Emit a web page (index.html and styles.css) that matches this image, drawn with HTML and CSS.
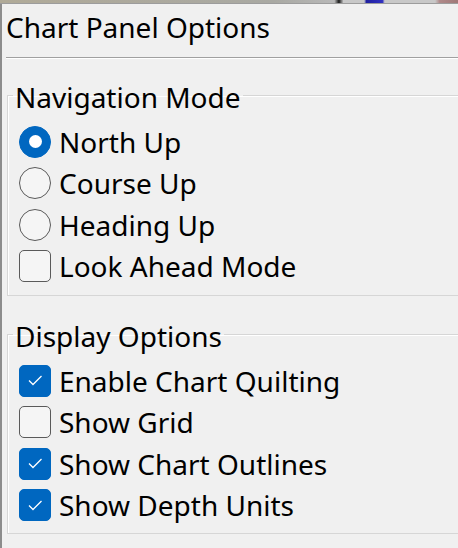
FILE: index.html
```html
<!DOCTYPE html>
<html>
<head>
<meta charset="utf-8">
<title>Chart Panel Options</title>
<link rel="stylesheet" href="styles.css">
</head>
<body>
<div class="topstrip"></div>
<div class="panel">
  <div class="title">Chart Panel Options</div>
  <div class="sep"></div>
  <fieldset class="group group-nav">
    <legend class="legend">Navigation Mode</legend>
    <div class="rows">
      <label class="row"><span class="radio radio-on"></span><span class="label">North Up</span></label>
      <label class="row"><span class="radio"></span><span class="label">Course Up</span></label>
      <label class="row"><span class="radio"></span><span class="label">Heading Up</span></label>
      <label class="row"><span class="check"></span><span class="label">Look Ahead Mode</span></label>
    </div>
  </fieldset>
  <fieldset class="group group-display">
    <legend class="legend">Display Options</legend>
    <div class="rows rows-display">
      <label class="row"><span class="check check-on"><svg viewBox="0 0 32 32" width="32" height="32"><path d="M10 16.5 L14 20.5 L22.5 12" fill="none" stroke="#fff" stroke-width="1.3"/></svg></span><span class="label">Enable Chart Quilting</span></label>
      <label class="row"><span class="check"></span><span class="label">Show Grid</span></label>
      <label class="row"><span class="check check-on"><svg viewBox="0 0 32 32" width="32" height="32"><path d="M10 16.5 L14 20.5 L22.5 12" fill="none" stroke="#fff" stroke-width="1.3"/></svg></span><span class="label">Show Chart Outlines</span></label>
      <label class="row"><span class="check check-on"><svg viewBox="0 0 32 32" width="32" height="32"><path d="M10 16.5 L14 20.5 L22.5 12" fill="none" stroke="#fff" stroke-width="1.3"/></svg></span><span class="label">Show Depth Units</span></label>
    </div>
  </fieldset>
</div>
</body>
</html>
```

FILE: styles.css
```css
html, body {
  margin: 0;
  padding: 0;
}
body {
  width: 458px;
  height: 548px;
  overflow: hidden;
  background: #f0f0f0;
  font-family: "Noto Sans", "Open Sans", sans-serif;
  color: #000;
}
.topstrip {
  height: 3px;
  background: linear-gradient(to right, #b0aa98 0%, #a9a9a3 60%, #b8b8b8 73%, #1a1a1a 74%, #c8c8c8 75%, #c8c8c8 79.5%, #2020a0 80%, #3030c0 83.5%, #c8c8c8 84%, #c8c8c8 95%, #b08a8a 96%, #a07878 100%);
  border-bottom: 1px solid #9c9c9c;
}
.panel {
  border-left: 2px solid #8c8c8c;
  height: 544px;
  box-sizing: border-box;
}
.title {
  font-size: 28px;
  line-height: 34px;
  padding: 6px 0 0 4px;
  height: 34px;
}
.sep {
  margin: 13px 0 0 4px;
  height: 0;
  border-top: 1px solid #a0a0a0;
  border-bottom: 1px solid #ffffff;
}
.group {
  margin: 18px -20px 0 5px;
  padding: 0 0 8px 11px;
  border: 1px solid #d6d6d6;
  box-shadow: inset 1px 1px 0 #ffffff;
}
.group-display {
  margin-top: 20px;
  padding-bottom: 7px;
}
.legend {
  font-size: 28px;
  line-height: 32px;
  padding: 4px 2px 0;
  margin-left: -6px;
}
.rows {
  padding-top: 8px;
}
.rows-display {
  padding-top: 8px;
}
.row {
  display: flex;
  align-items: center;
  gap: 8px;
  height: 41.5px;
  font-size: 28px;
}
.radio {
  width: 30px;
  height: 30px;
  border: 1.5px solid #5a5a5a;
  border-radius: 50%;
  background: #f5f5f5;
  flex: none;
  box-sizing: content-box;
}
.radio-on {
  border-color: #0067c0;
  background: #0067c0;
  display: flex;
  align-items: center;
  justify-content: center;
}
.radio-on::after {
  content: "";
  width: 13px;
  height: 13px;
  border-radius: 50%;
  background: #ffffff;
}
.check {
  width: 30px;
  height: 30px;
  border: 1.5px solid #5a5a5a;
  border-radius: 5px;
  background: #f5f5f5;
  flex: none;
  box-sizing: content-box;
  position: relative;
}
.check-on {
  border-color: #0067c0;
  background: #0067c0;
}
.check-on svg {
  position: absolute;
  left: -1.5px;
  top: -1.5px;
  display: block;
}
.label {
  white-space: nowrap;
}
```
